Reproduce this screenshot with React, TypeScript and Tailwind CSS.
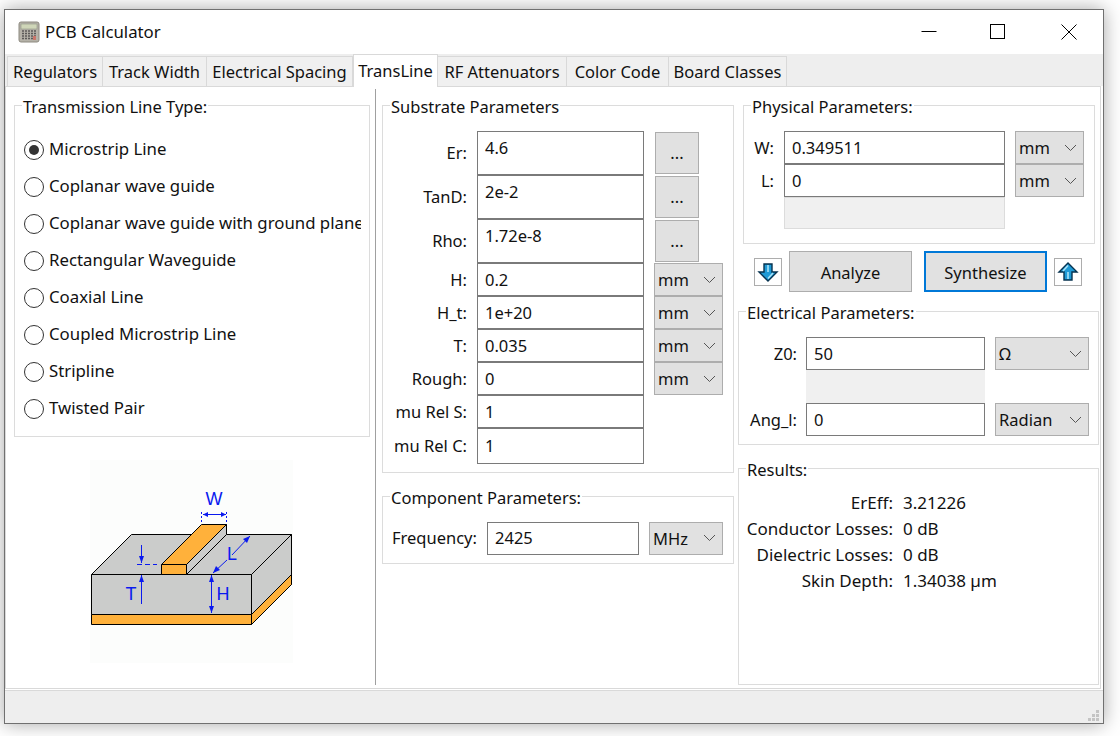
import type { ReactNode } from "react";

const FONT = "font-['Noto_Sans',sans-serif]";

const GroupBox = ({ title, className, children }: { title: string; className: string; children: ReactNode }) => (
  <div className={`relative border border-[#dcdcdc] ${className}`}>
    <span className="absolute left-[7px] top-[-10px] bg-white px-[1px] leading-[22px] whitespace-nowrap">{title}</span>
    {children}
  </div>
);

const Chevron = () => (
  <svg width="13" height="8" viewBox="0 0 13 8" className="shrink-0">
    <path d="M1 1 L6.5 6.5 L12 1" fill="none" stroke="#555" strokeWidth="1" />
  </svg>
);

const Combo = ({ value, className }: { value: string; className: string }) => (
  <div className={`flex items-center justify-between pl-[3px] pr-[6px] bg-[#e1e1e1] border border-[#adadad] ${className}`}>
    <span className="pt-[2px]">{value}</span>
    <Chevron />
  </div>
);

const Field = ({ value, className }: { value: string; className: string }) => (
  <div className={`flex items-center px-[7px] pt-[1px] bg-white border border-[#7a7a7a] ${className}`}>{value}</div>
);

const Radio = ({ label, checked }: { label: string; checked?: boolean }) => (
  <div className="flex items-center h-[37px] text-[16.8px] whitespace-nowrap overflow-hidden">
    <span className="flex items-center justify-center w-[20px] h-[20px] mr-[5px] shrink-0 rounded-full border border-[#333] bg-white">
      {checked && <span className="w-[10px] h-[10px] rounded-full bg-[#333]" />}
    </span>
    <span className="mb-[1px]">{label}</span>
  </div>
);

const Tab = ({ label, className, active }: { label: string; className: string; active?: boolean }) => (
  <div
    className={
      active
        ? `flex items-center justify-center h-[33px] mb-[-1px] bg-white border border-b-0 border-[#d9d9d9] z-10 ${className}`
        : `flex items-center justify-center h-[30px] pt-[1px] bg-[#f0f0f0] border border-b-0 border-l-0 border-[#d9d9d9] first:border-l ${className}`
    }
  >
    {label}
  </div>
);

const ArrowButton = ({ up }: { up?: boolean }) => (
  <div className="flex items-center justify-center w-[28px] h-[28px] bg-white border border-[#adadad]">
    <svg width="22" height="22" viewBox="0 0 22 22" className={up ? "" : "rotate-180"}>
      <path d="M11 2 L20 11 L15 11 L15 19 L7 19 L7 11 L2 11 Z" fill="#1e9ad6" stroke="#06324f" strokeWidth="1.4" />
      <path d="M11 4.5 L6 10 M11 11 V18" stroke="#a8e2f7" strokeWidth="1.6" fill="none" />
    </svg>
  </div>
);

const MicrostripDiagram = () => (
  <svg width="203" height="203" viewBox="90 460 203 203" className="bg-[#fcfdfc]">
    <g stroke="#000" strokeWidth="1" strokeLinejoin="round" transform="translate(-0.5 0.5)">
      <path d="M92 574 L132 534 L292 534 L252 574 Z" fill="#cbcccb" />
      <path d="M252 574 L292 534 L292 584 L252 624 Z" fill="#cbcccb" />
      <path d="M252 614 L292 574 L292 584 L252 624 Z" fill="#ffb13b" />
      <rect x="92" y="574" width="160" height="40" fill="#cbcccb" />
      <rect x="92" y="614" width="160" height="10" fill="#ffb13b" />
      <path d="M162 564 L202 524 L227 524 L187 564 Z" fill="#ffb13b" />
      <path d="M187 564 L227 524 L227 534 L187 574 Z" fill="#cbcccb" />
      <rect x="162" y="564" width="25" height="10" fill="#ffb13b" />
    </g>
    <g stroke="#0a1aef" strokeWidth="1" fill="none">
      <path d="M201.5 512 V524 M226.5 512 V524" strokeDasharray="2 2" />
      <path d="M203 514.5 H226" />
      <path d="M137 564.5 H157" strokeDasharray="5 3" />
      <path d="M141.5 545 V563 M141.5 575 V604 M211.5 575 V613" />
      <path d="M213 573 L227 560 M232 555 L250 536" />
    </g>
    <g fill="#0a1aef">
      <path d="M203 514.5 L208 512 V517 Z M226 514.5 L221 512 V517 Z" />
      <path d="M141.5 563 L139 556 H144 Z M141.5 575 L139 582 H144 Z" />
      <path d="M211.5 575 L209 582 H214 Z M211.5 613 L209 606 H214 Z" />
      <path d="M213 573 L216 566 L220 570 Z M250 536 L243 539 L247 543 Z" />
    </g>
    <g fill="#0a1aef" fontSize="18" textAnchor="middle" fontFamily="'Liberation Sans', sans-serif">
      <text x="214" y="505">W</text>
      <text x="232" y="560">L</text>
      <text x="131" y="600">T</text>
      <text x="223" y="600">H</text>
    </g>
  </svg>
);

const substrateTall = [
  { label: "Er:", value: "4.6" },
  { label: "TanD:", value: "2e-2" },
  { label: "Rho:", value: "1.72e-8" },
];

const substrateUnits = [
  { label: "H:", value: "0.2" },
  { label: "H_t:", value: "1e+20" },
  { label: "T:", value: "0.035" },
  { label: "Rough:", value: "0" },
];

const results = [
  { label: "ErEff:", value: "3.21226" },
  { label: "Conductor Losses:", value: "0 dB" },
  { label: "Dielectric Losses:", value: "0 dB" },
  { label: "Skin Depth:", value: "1.34038 µm" },
];

const radios = [
  "Coplanar wave guide",
  "Coplanar wave guide with ground plane",
  "Rectangular Waveguide",
  "Coaxial Line",
  "Coupled Microstrip Line",
  "Stripline",
  "Twisted Pair",
];

export default function App() {
  return (
    <div className={`w-[1120px] h-[736px] overflow-hidden bg-white pl-[4px] pt-[9px] text-[16.5px] text-[#111] ${FONT}`}>
      <div className="flex flex-col w-[1100px] h-[715px] bg-white border border-[#707070] shadow-[0_0_18px_rgba(0,0,0,0.35)]">
        {/* title bar */}
        <div className="flex items-center h-[44px] shrink-0 pl-[13px]">
          <svg width="22" height="22" viewBox="0 0 22 22" className="mr-[5px]">
            <rect x="1" y="1" width="20" height="20" rx="2" fill="#b5b2a8" stroke="#8d8a80" />
            <rect x="3" y="3" width="16" height="5" fill="#cfd6b8" stroke="#8f9585" strokeWidth="0.6" />
            <path d="M4 10 H18 M4 12.5 H18 M4 15 H18 M4 17.5 H18" stroke="#5c5a58" strokeWidth="1.5" strokeDasharray="2 1" />
            <rect x="15" y="15" width="3" height="4" fill="#c9766b" />
          </svg>
          <span className="text-[16.8px]">PCB Calculator</span>
          <div className="flex items-center ml-auto">
            <svg width="16" height="16" viewBox="0 0 16 16" className="mr-[53px]"><path d="M0.5 7.5 H15.5" stroke="#000" /></svg>
            <svg width="16" height="16" viewBox="0 0 16 16" className="mr-[55px]"><rect x="0.5" y="0.5" width="14" height="14" fill="none" stroke="#000" /></svg>
            <svg width="16" height="16" viewBox="0 0 16 16" className="mr-[26px]"><path d="M0.5 0.5 L15.5 15.5 M15.5 0.5 L0.5 15.5" stroke="#000" /></svg>
          </div>
        </div>

        {/* tabs */}
        <div className="flex items-end h-[32px] shrink-0 bg-[#eeeeee] pl-[2px]">
          <Tab label="Regulators" className="w-[96px]" />
          <Tab label="Track Width" className="w-[104px]" />
          <Tab label="Electrical Spacing" className="w-[146px]" />
          <Tab label="TransLine" className="w-[85px]" active />
          <Tab label="RF Attenuators" className="w-[129px]" />
          <Tab label="Color Code" className="w-[102px]" />
          <Tab label="Board Classes" className="w-[118px]" />
        </div>

        {/* page */}
        <div className="flex h-[603px] shrink-0 w-[1096px] bg-white border border-[#d9d9d9] pl-[8px] pt-[18px]">
          <div className="flex flex-col w-[356px] shrink-0">
            <GroupBox title="Transmission Line Type:" className="h-[332px] pl-[9px] pr-[8px] pt-[25px]">
              <Radio label="Microstrip Line" checked />
              {radios.map((r) => (
                <Radio key={r} label={r} />
              ))}
            </GroupBox>
            <div className="ml-[76px] mt-[23px]">
              <MicrostripDiagram />
            </div>
          </div>

          <div className="w-[1px] h-[596px] mt-[-16px] ml-[5px] mr-[6px] shrink-0 bg-[#a0a0a0]" />

          <div className="flex flex-col w-[352px] shrink-0">
            <GroupBox title="Substrate Parameters" className="h-[368px] pt-[25px]">
              {substrateTall.map((row) => (
                <div key={row.label} className="flex items-center h-[44px]">
                  <span className="w-[94px] pr-[10px] text-right">{row.label}</span>
                  <div className="w-[167px] h-[44px] px-[7px] pt-[4px] bg-white border border-[#7a7a7a]">{row.value}</div>
                  <div className="flex items-center justify-center w-[44px] h-[42px] ml-[11px] bg-[#e1e1e1] border border-[#adadad]">...</div>
                </div>
              ))}
              {substrateUnits.map((row) => (
                <div key={row.label} className="flex items-center h-[33px]">
                  <span className="w-[94px] pt-[1px] pr-[10px] text-right">{row.label}</span>
                  <Field value={row.value} className="w-[167px] h-[33px]" />
                  <Combo value="mm" className="w-[69px] h-[33px] ml-[10px]" />
                </div>
              ))}
              <div className="flex items-center h-[33px]">
                <span className="w-[94px] pt-[1px] pr-[10px] text-right">mu Rel S:</span>
                <Field value="1" className="w-[167px] h-[33px]" />
              </div>
              <div className="flex items-center h-[36px]">
                <span className="w-[94px] pr-[10px] text-right">mu Rel C:</span>
                <Field value="1" className="w-[167px] h-[36px]" />
              </div>
            </GroupBox>

            <GroupBox title="Component Parameters:" className="flex items-center h-[68px] mt-[23px] pl-[9px] pt-[16px]">
              <span className="w-[95px]">Frequency:</span>
              <Field value="2425" className="w-[152px] h-[33px]" />
              <Combo value="MHz" className="w-[74px] h-[33px] ml-[10px]" />
            </GroupBox>
          </div>

          <div className="flex flex-col w-[361px] ml-[4px] shrink-0">
            <GroupBox title="Physical Parameters:" className="w-[352px] h-[139px] ml-[5px] pt-[25px]">
              <div className="flex items-center h-[33px]">
                <span className="w-[30px] pt-[1px] text-right">W:</span>
                <Field value="0.349511" className="w-[221px] h-[33px] ml-[10px]" />
                <Combo value="mm" className="w-[69px] h-[33px] ml-[10px]" />
              </div>
              <div className="flex items-center h-[33px]">
                <span className="w-[30px] pt-[1px] text-right">L:</span>
                <Field value="0" className="w-[221px] h-[33px] ml-[10px]" />
                <Combo value="mm" className="w-[69px] h-[33px] ml-[10px]" />
              </div>
              <div className="w-[221px] h-[32px] ml-[40px] bg-[#f0f0f0] border border-[#dcdcdc]" />
            </GroupBox>

            <div className="flex items-center h-[41px] mt-[7px] pl-[16px]">
              <ArrowButton />
              <div className="flex items-center justify-center w-[123px] h-[41px] ml-[7px] pt-[3px] bg-[#e1e1e1] border border-[#adadad]">Analyze</div>
              <div className="flex items-center justify-center w-[123px] h-[41px] ml-[12px] pt-[3px] bg-[#e1e1e1] border-2 border-[#0078d7]">Synthesize</div>
              <div className="ml-[7px]">
                <ArrowButton up />
              </div>
            </div>

            <GroupBox title="Electrical Parameters:" className="h-[134px] mt-[19px] pt-[25px]">
              <div className="flex items-center h-[33px]">
                <span className="w-[58px] pt-[1px] text-right">Z0:</span>
                <Field value="50" className="w-[179px] h-[33px] ml-[9px]" />
                <Combo value="Ω" className="w-[94px] h-[33px] ml-[10px]" />
              </div>
              <div className="w-[179px] h-[33px] ml-[67px] bg-[#f0f0f0]" />
              <div className="flex items-center h-[33px]">
                <span className="w-[58px] pt-[1px] text-right">Ang_l:</span>
                <Field value="0" className="w-[179px] h-[33px] ml-[9px]" />
                <Combo value="Radian" className="w-[94px] h-[33px] ml-[10px]" />
              </div>
            </GroupBox>

            <GroupBox title="Results:" className="h-[217px] mt-[23px] pt-[21px]">
              {results.map((row) => (
                <div key={row.label} className="flex items-center h-[26px] text-[17px]">
                  <span className="w-[154px] text-right whitespace-nowrap">{row.label}</span>
                  <span className="ml-[10px]">{row.value}</span>
                </div>
              ))}
            </GroupBox>
          </div>
        </div>

        {/* status bar */}
        <div className="relative flex-1 bg-[#eeeeee] border-t border-[#d9d9d9] mt-[1px]">
          <div className="absolute right-[4px] bottom-[2px] grid grid-cols-3 gap-[1px] w-[11px]">
            <span />
            <span />
            <span className="h-[3px] bg-[#c4c4c4]" />
            <span />
            <span className="h-[3px] bg-[#c4c4c4]" />
            <span className="h-[3px] bg-[#c4c4c4]" />
            <span className="h-[3px] bg-[#c4c4c4]" />
            <span className="h-[3px] bg-[#c4c4c4]" />
            <span className="h-[3px] bg-[#c4c4c4]" />
          </div>
        </div>
      </div>
    </div>
  );
}
